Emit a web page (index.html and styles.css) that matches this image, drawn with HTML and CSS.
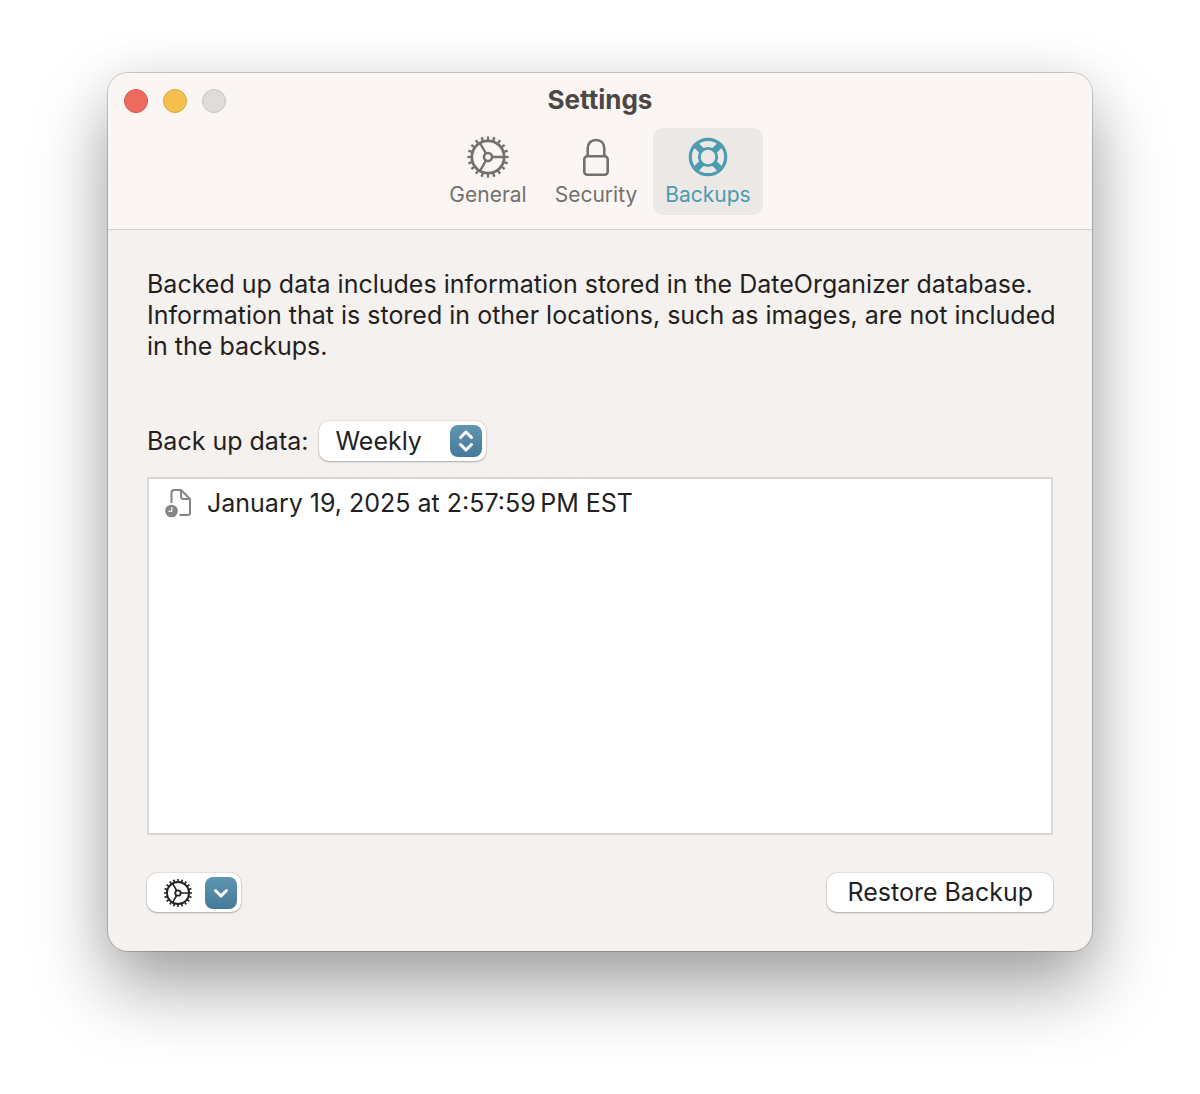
FILE: index.html
```html
<!DOCTYPE html>
<html lang="en">
<head>
  <meta charset="UTF-8">
  <meta name="viewport" content="width=device-width, initial-scale=1.0">
  <title>Settings</title>
  <link rel="stylesheet" href="styles.css">
</head>
<body>
  <svg class="sprite" aria-hidden="true">
    <symbol id="gear" viewBox="0 0 44 44">
      <g fill="none" stroke="currentColor">
        <circle cx="22" cy="22" r="16.2" stroke-width="2.8"/>
        <circle cx="22" cy="22" r="18.8" stroke-width="3.6" pathLength="200" stroke-dasharray="4 6" stroke-dashoffset="2"/>
        <circle cx="22" cy="22" r="4" stroke-width="2.6"/>
        <path d="M26.5 22H38M19.8 18.1L13.9 8M19.8 25.9L13.9 36" stroke-width="2.4"/>
      </g>
    </symbol>
  </svg>

  <main class="window">
    <header class="toolbar">
      <div class="titlebar">
        <div class="lights">
          <button class="light close" aria-label="Close"></button>
          <button class="light minimize" aria-label="Minimize"></button>
          <button class="light zoom" aria-label="Zoom" disabled></button>
        </div>
        <h1>Settings</h1>
      </div>
      <nav class="tabs">
        <button class="tab">
          <svg class="tab-icon"><use href="#gear"/></svg>
          General
        </button>
        <button class="tab">
          <svg class="tab-icon" viewBox="0 0 44 44" fill="none" stroke="currentColor" stroke-width="2.6">
            <rect x="10.3" y="21.3" width="23.4" height="18.4" rx="3"/>
            <path d="M13.7 21V13.5C13.7 8.2 17 5 22 5s8.3 3.2 8.3 8.5V21"/>
          </svg>
          Security
        </button>
        <button class="tab active">
          <svg class="tab-icon" viewBox="0 0 44 44" fill="none" stroke="currentColor">
            <circle cx="22" cy="22" r="17.7" stroke-width="3.2"/>
            <circle cx="22" cy="22" r="8.7" stroke-width="2.8"/>
            <path d="M28.2 28.2l5.6 5.6M15.8 15.8l-5.6-5.6M28.2 15.8l5.6-5.6M15.8 28.2l-5.6 5.6" stroke-width="6.4"/>
          </svg>
          Backups
        </button>
      </nav>
    </header>

    <section class="content">
      <p>Backed up data includes information stored in the DateOrganizer database. Information that is stored in other locations, such as images, are not included in the backups.</p>

      <div class="frequency">
        <label for="frequency">Back up data:</label>
        <div class="popup">
          <select id="frequency">
            <option>Daily</option>
            <option selected>Weekly</option>
            <option>Monthly</option>
          </select>
          <span class="knob">
            <svg viewBox="0 0 32 32"><path d="M10.5 12.5L16 7l5.5 5.5M10.5 19.500L16 25l5.500-5.500"/></svg>
          </span>
        </div>
      </div>

      <ul class="backups">
        <li>
          <svg class="file-icon" viewBox="0 0 28 30">
            <path d="M6.500 15V4.500Q6.500 2 9 2H16l9 9v13.500Q25 27 22.500 27H14.500M16 2v6.500Q16 11 18.500 11H25" fill="none" stroke="currentColor" stroke-width="2" stroke-linejoin="round"/>
            <circle cx="6.500" cy="23" r="6.300" fill="currentColor"/>
            <path d="M6.800 19v4.300H3.500" fill="none" stroke="#fff" stroke-width="1.200"/>
          </svg>
          <span>January 19, 2025 at 2:57:59&#8239;PM EST</span>
        </li>
      </ul>

      <footer class="actions">
        <button class="btn menu-btn" aria-label="Backup actions">
          <svg class="menu-icon"><use href="#gear"/></svg>
          <span class="knob">
            <svg viewBox="0 0 32 32"><path d="M10.500 13.500L16 19l5.500-5.500"/></svg>
          </span>
        </button>
        <button class="btn">Restore Backup</button>
      </footer>
    </section>
  </main>
</body>
</html>
```
FILE: styles.css
```css
* {
  box-sizing: border-box;
}

body {
  margin: 0;
  min-height: 100vh;
  padding: 73px 9% 143px;
  display: flex;
  background: #fff;
  color: #231f1f;
  font-family: Inter, sans-serif;
  font-size: 25px;
}

button,
select {
  font: inherit;
  color: inherit;
  border: none;
}

.sprite {
  position: absolute;
  width: 0;
  height: 0;
}

.window {
  flex: 1;
  display: flex;
  flex-direction: column;
  background: #f5f1ee;
  border-radius: 20px;
  box-shadow: 0 0 0 1px rgba(0,0,0,0.18), 0 36px 72px rgba(0,0,0,0.36), 0 0 50px rgba(0,0,0,0.06);
}

.toolbar {
  background: #fbf6f3;
  border-bottom: 1px solid #d3cfcc;
  border-radius: 20px 20px 0 0;
  padding-bottom: 14px;
}

.titlebar {
  display: grid;
  grid-template-columns: 1fr auto 1fr;
  align-items: center;
  height: 55px;
  padding: 0 16px;
}

.titlebar h1 {
  margin: 0;
  font-size: 26px;
  line-height: 32px;
  padding-bottom: 2px;
  font-weight: 700;
  color: #4b4745;
}

.lights {
  display: flex;
  gap: 15px;
}

.light {
  width: 24px;
  height: 24px;
  padding: 0;
  border-radius: 50%;
}

.close {
  background: #ed6a5f;
  border: 1px solid #d9574e;
}

.minimize {
  background: #f5bf4f;
  border: 1px solid #dca73c;
}

.zoom {
  background: #e0dcd9;
  border: 1px solid #c9c5c2;
}

.tabs {
  display: flex;
  justify-content: center;
  gap: 4px;
}

.tab {
  display: flex;
  flex-direction: column;
  align-items: center;
  height: 87px;
  padding: 7px 12px 0;
  border-radius: 10px;
  background: none;
  color: #73706e;
  font-size: 21px;
  line-height: 31px;
}

.tab.active {
  background: #ece8e5;
  color: #4c9bb0;
}

.tab-icon {
  width: 44px;
  height: 44px;
}

.content {
  flex: 1;
  display: flex;
  flex-direction: column;
  padding: 39px;
}

.content p {
  margin: 0 -8px 59px 0;
  line-height: 31px;
}

.frequency {
  display: flex;
  align-items: center;
  gap: 11px;
  margin-bottom: 16px;
}

.popup {
  position: relative;
}

.popup select {
  display: block;
  appearance: none;
  width: 167px;
  height: 40px;
  padding: 0 48px 0 16px;
}

.popup select,
.btn {
  background: #fff;
  border-radius: 10px;
  box-shadow: 0 0 0 1px rgba(0,0,0,0.06), 0 1px 2px rgba(0,0,0,0.25);
}

.knob {
  width: 32px;
  height: 32px;
  border-radius: 8px;
  background: linear-gradient(#5f96b0, #45799a);
}

.popup .knob {
  position: absolute;
  top: 4px;
  right: 4px;
  pointer-events: none;
}

.knob svg {
  display: block;
  fill: none;
  stroke: #fff;
  stroke-width: 3;
  stroke-linecap: round;
  stroke-linejoin: round;
}

.backups {
  flex: 1;
  margin: 0 0 38px;
  padding: 7px 16px;
  list-style: none;
  background: #fff;
  border: 2px solid #dad8d7;
}

.backups li {
  display: flex;
  align-items: center;
  gap: 14px;
  line-height: 34px;
}

.file-icon {
  width: 28px;
  height: 30px;
  color: #858585;
}

.actions {
  display: flex;
  justify-content: space-between;
}

.btn {
  display: flex;
  align-items: center;
  height: 39px;
  padding: 0 20px 1px;
}

.menu-btn {
  gap: 12px;
  padding: 0 4px 0 16px;
}

.menu-icon {
  width: 30px;
  height: 30px;
}
```
